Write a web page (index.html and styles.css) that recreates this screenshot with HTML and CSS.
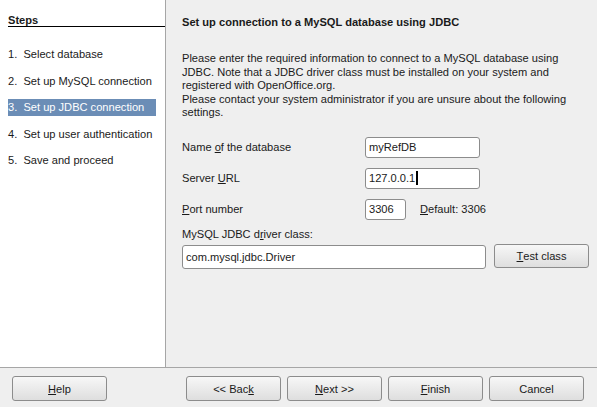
FILE: index.html
```html
<!DOCTYPE html>
<html>
<head>
<meta charset="utf-8">
<link rel="stylesheet" href="styles.css">
</head>
<body>
<div class="wizard">
  <div class="main">
    <div class="sidebar">
      <div class="steps-title">Steps</div>
      <ul class="steps">
        <li class="step">1.&nbsp; Select database</li>
        <li class="step">2.&nbsp; Set up MySQL connection</li>
        <li class="step active">3.&nbsp; Set up JDBC connection</li>
        <li class="step">4.&nbsp; Set up user authentication</li>
        <li class="step">5.&nbsp; Save and proceed</li>
      </ul>
    </div>
    <div class="content">
      <div class="page-title">Set up connection to a MySQL database using JDBC</div>
      <p class="intro">Please enter the required information to connect to a MySQL database using JDBC. Note that a JDBC driver class must be installed on your system and registered with OpenOffice.org.<br>Please contact your system administrator if you are unsure about the following settings.</p>
      <div class="form-row row-name">
        <span class="label">Name <u>o</u>f the database</span>
        <span class="field field-wide">myRefDB</span>
      </div>
      <div class="form-row row-url">
        <span class="label">Server <u>U</u>RL</span>
        <span class="field field-wide">127.0.0.1<span class="caret"></span></span>
      </div>
      <div class="form-row row-port">
        <span class="label"><u>P</u>ort number</span>
        <span class="field field-port">3306</span>
        <span class="default"><u>D</u>efault: 3306</span>
      </div>
      <div class="driver-label">MySQL JDBC d<u>r</u>iver class:</div>
      <div class="driver-row">
        <span class="field field-driver">com.mysql.jdbc.Driver</span>
        <span class="btn btn-test"><u>T</u>est class</span>
      </div>
    </div>
  </div>
  <div class="footer">
    <span class="btn btn-help"><u>H</u>elp</span>
    <span class="spacer"></span>
    <span class="btn">&lt;&lt; Bac<u>k</u></span>
    <span class="btn"><u>N</u>ext &gt;&gt;</span>
    <span class="btn"><u>F</u>inish</span>
    <span class="btn">Cancel</span>
  </div>
</div>
</body>
</html>
```
FILE: styles.css
```css
html, body {
  margin: 0;
  padding: 0;
}
body {
  font-family: "Liberation Sans", Arial, sans-serif;
  font-size: 11.1px;
  color: #1a1a1a;
  background: #efefef;
}
.wizard {
  width: 597px;
  height: 407px;
  display: flex;
  flex-direction: column;
}
.main {
  height: 367px;
  flex-shrink: 0;
  display: flex;
}
.sidebar {
  flex-shrink: 0;
  width: 166px;
  box-sizing: border-box;
  background: #ffffff;
  border-right: 1px solid #a6a6a6;
  padding-left: 8px;
}
.steps-title {
  margin-top: 13px;
  height: 13px;
  line-height: 15px;
  font-weight: bold;
  border-bottom: 1px solid #000;
}
.steps {
  list-style: none;
  margin: 19px 0 0 0;
  padding: 0;
}
.step {
  width: 148px;
  height: 17px;
  line-height: 17px;
  margin-bottom: 9.5px;
  white-space: nowrap;
}
.step.active {
  background: #6b8db6;
  color: #ffffff;
}
.content {
  flex: 1;
  padding-left: 16px;
  padding-right: 20px;
}
.page-title {
  margin-top: 15px;
  font-weight: bold;
  line-height: 14px;
}
.intro {
  margin: 23px 0 0 0;
  line-height: 13.5px;
}
.form-row {
  display: flex;
  align-items: center;
  height: 21px;
}
.row-name { margin-top: 17px; }
.row-url { margin-top: 10px; }
.row-port { margin-top: 10px; }
.label {
  width: 183px;
  flex-shrink: 0;
}
.field {
  display: inline-block;
  box-sizing: border-box;
  height: 21px;
  line-height: 19px;
  background: #ffffff;
  border: 1px solid #8c8c8c;
  border-radius: 3px;
  padding-left: 3px;
  white-space: nowrap;
}
.field-wide { width: 115px; }
.field-port { width: 41px; }
.default { margin-left: 14px; }
.caret {
  display: inline-block;
  width: 2px;
  height: 14px;
  background: #000;
  vertical-align: -3px;
  margin-left: 1px;
}
.driver-label {
  margin-top: 7px;
  line-height: 14px;
}
.driver-row {
  display: flex;
  align-items: center;
  margin-top: 4px;
}
.field-driver {
  width: 304px;
  height: 24px;
  line-height: 22px;
  flex-shrink: 0;
}
.btn {
  display: inline-flex;
  align-items: center;
  justify-content: center;
  box-sizing: border-box;
  flex-shrink: 0;
  width: 95px;
  height: 25px;
  border: 1px solid #8c8c8c;
  border-radius: 3px;
  background: linear-gradient(#f7f7f7, #dedede);
  color: #1a1a1a;
}
.btn-test {
  margin-left: 8px;
  margin-top: -2px;
  height: 24px;
}
.footer {
  height: 39px;
  border-top: 1px solid #a6a6a6;
  display: flex;
  align-items: flex-start;
  padding: 8px 13px 0 12px;
  gap: 6px;
  box-sizing: border-box;
}
.spacer { flex: 1; }
```
